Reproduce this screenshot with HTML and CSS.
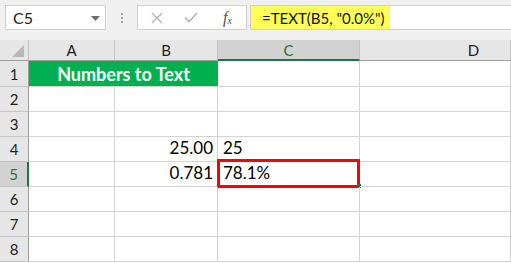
FILE: index.html
```html
<!DOCTYPE html>
<html lang="en">
<head>
  <meta charset="UTF-8">
  <title>Numbers to Text</title>
  <link rel="stylesheet" href="styles.css">
</head>
<body>
  <div class="app">
    <div class="toolbar">
      <div class="namebox">
        <span>C5</span>
        <svg class="drop" width="9" height="5" viewBox="0 0 9 5"><path d="M0 0h9L4.5 5z" fill="#6e6e6e"/></svg>
      </div>
      <div class="grip"><i></i><i></i><i></i></div>
      <div class="fx-buttons">
        <svg class="btn" width="12" height="12" viewBox="0 0 12 12"><path d="M1 1l10 10M11 1L1 11" stroke="#b4b4b4" stroke-width="1.4" fill="none"/></svg>
        <svg class="btn" width="14" height="11" viewBox="0 0 14 11"><path d="M1 5.5l4 4L13 1" stroke="#b4b4b4" stroke-width="1.6" fill="none"/></svg>
        <span class="fx">f<sub>x</sub></span>
      </div>
      <div class="formula"><span class="hl">=TEXT(B5, "0.0%")</span></div>
    </div>

    <div class="sheet">
      <div class="corner"><svg width="12" height="12" viewBox="0 0 12 12"><path d="M12 0v12H0z" fill="#b6b6b6"/></svg></div>
      <div class="colhead">A</div>
      <div class="colhead">B</div>
      <div class="colhead active">C</div>
      <div class="colhead">D</div>

      <div class="rowhead">1</div>
      <div class="cell title">Numbers to Text</div>
      <div class="cell"></div>
      <div class="cell"></div>

      <div class="rowhead">2</div>
      <div class="cell"></div><div class="cell"></div><div class="cell"></div><div class="cell"></div>

      <div class="rowhead">3</div>
      <div class="cell"></div><div class="cell"></div><div class="cell"></div><div class="cell"></div>

      <div class="rowhead">4</div>
      <div class="cell"></div>
      <div class="cell num">25.00</div>
      <div class="cell">25</div>
      <div class="cell"></div>

      <div class="rowhead active">5</div>
      <div class="cell"></div>
      <div class="cell num">0.781</div>
      <div class="cell selected">78.1%<span class="sel-box"></span><span class="handle"></span></div>
      <div class="cell"></div>

      <div class="rowhead">6</div>
      <div class="cell"></div><div class="cell"></div><div class="cell"></div><div class="cell"></div>

      <div class="rowhead">7</div>
      <div class="cell"></div><div class="cell"></div><div class="cell"></div><div class="cell"></div>

      <div class="rowhead">8</div>
      <div class="cell"></div><div class="cell"></div><div class="cell"></div><div class="cell"></div>
    </div>
  </div>
</body>
</html>
```

FILE: styles.css
```css
* {
  box-sizing: border-box;
}
body {
  margin: 0;
  background: #fff;
  font-family: Lato, "Open Sans", sans-serif;
  color: #000;
}
.app {
  width: 511px;
  height: 263px;
  overflow: hidden;
}
.toolbar {
  display: flex;
  align-items: center;
  height: 40px;
  padding: 5px 0 10px 5px;
  background: #f0f0f0;
}
.namebox {
  display: flex;
  align-items: center;
  justify-content: space-between;
  width: 101px;
  height: 25px;
  padding: 0 5px 0 7px;
  background: #fff;
  border: 1px solid #d0d0d0;
  font-size: 16px;
  color: #222;
}
.namebox .drop {
  margin-top: 1px;
}
.grip {
  display: flex;
  flex-direction: column;
  gap: 2px;
  margin: 0 14px 0 15px;
}
.grip i {
  display: block;
  width: 2px;
  height: 2px;
  background: #a8a8a8;
}
.fx-buttons {
  display: flex;
  align-items: center;
  width: 110px;
  height: 25px;
  padding-left: 13px;
  background: #fff;
  border: 1px solid #d0d0d0;
}
.fx-buttons .btn:first-child {
  margin-right: 21px;
}
.fx-buttons .btn + .btn {
  margin-right: 25px;
}
.fx {
  font-family: "Liberation Serif", serif;
  font-style: italic;
  font-size: 16px;
  color: #555;
}
.fx sub {
  font-size: 10px;
  vertical-align: -1px;
}
.formula {
  display: flex;
  align-items: center;
  flex: 1;
  height: 25px;
  margin-left: 3px;
  background: #fff;
  border: 1px solid #d0d0d0;
  border-right: none;
}
.formula .hl {
  display: flex;
  align-items: center;
  height: 100%;
  padding: 0 5px 0 11px;
  background: #ffff59;
  font-size: 15px;
  color: #111;
}
.sheet {
  display: grid;
  grid-template-columns: 29px 86px 103px 142px 1fr;
  grid-template-rows: 21px 26px repeat(7, 25px);
}
.corner {
  display: flex;
  align-items: flex-end;
  justify-content: flex-end;
  padding: 0 4px 3px 0;
  background: #e6e6e6;
  border-right: 1px solid #c4c4c4;
  border-bottom: 1px solid #9e9e9e;
}
.colhead {
  display: flex;
  align-items: center;
  justify-content: center;
  background: #e6e6e6;
  border-right: 1px solid #c4c4c4;
  border-bottom: 1px solid #9e9e9e;
  font-size: 15px;
  color: #222;
}
.colhead:nth-child(5) {
  padding-left: 77px;
}
.colhead.active {
  background: #d2d2d2;
  color: #217346;
  border-bottom: 2px solid #217346;
}
.rowhead {
  display: flex;
  align-items: center;
  justify-content: center;
  background: #e6e6e6;
  border-right: 1px solid #9e9e9e;
  border-bottom: 1px solid #c4c4c4;
  font-size: 15px;
  color: #222;
}
.rowhead.active {
  background: #d2d2d2;
  color: #217346;
  border-right: 2px solid #217346;
}
.cell {
  position: relative;
  display: flex;
  align-items: flex-end;
  padding: 0 4px 3px 5px;
  border-right: 1px solid #d4d4d4;
  border-bottom: 1px solid #d4d4d4;
  font-size: 17px;
  white-space: nowrap;
}
.cell.num {
  justify-content: flex-end;
}
.cell.title {
  grid-column: span 2;
  justify-content: center;
  align-items: center;
  padding: 0;
  background: #00b050;
  color: #fff;
  font-size: 18px;
  font-weight: bold;
  border-right: none;
}
.sel-box {
  position: absolute;
  top: -3px;
  left: -1px;
  right: -1px;
  bottom: -2px;
  border: 3px solid #ff0000;
}
.handle {
  position: absolute;
  right: -2px;
  bottom: -2px;
  width: 4px;
  height: 4px;
  background: #217346;
}
```
